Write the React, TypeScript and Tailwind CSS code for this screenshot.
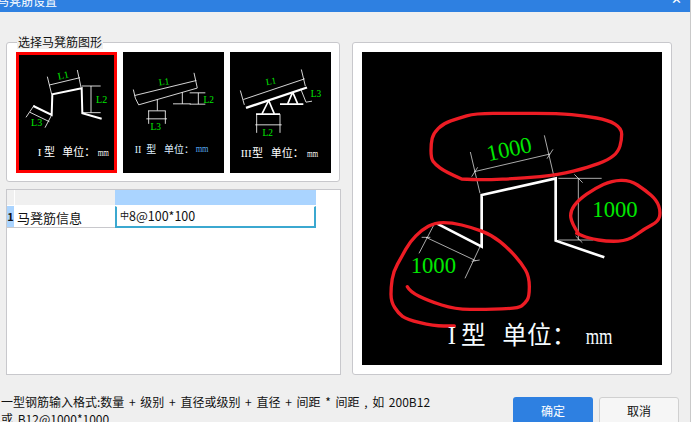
const CJK = "font-['Noto_Sans_CJK_SC','Liberation_Sans',sans-serif]";
const SERIF = "'Liberation Serif','Noto Sans CJK SC',serif";
const GREEN = '#00e800';

// hand drawn marks, points taken in canvas units
const smooth = (pts: number[][]) => {
  let d = `M${pts[0][0]} ${pts[0][1]}`;
  for (let i = 1; i < pts.length - 1; i++) {
    const mx = (pts[i][0] + pts[i + 1][0]) / 2;
    const my = (pts[i][1] + pts[i + 1][1]) / 2;
    d += ` Q${pts[i][0]} ${pts[i][1]} ${mx} ${my}`;
  }
  const last = pts[pts.length - 1];
  return d + ` L${last[0]} ${last[1]}`;
};

const LOOP_TOP = [[350, 447], [300, 425], [270, 402], [258, 385], [258, 340], [265, 310], [295, 280], [340, 265], [390, 250], [500, 250], [640, 250], [720, 258], [790, 270], [830, 295], [830, 330], [820, 365], [790, 390], [730, 412], [640, 435], [530, 445], [415, 450], [350, 447]];
const LOOP_RIGHT = [[700, 610], [680, 580], [675, 545], [700, 510], [750, 475], [800, 452], [855, 450], [900, 480], [935, 510], [947, 545], [940, 575], [900, 595], [850, 632], [790, 635], [730, 625], [695, 610]];
const LOOP_LOW = [[187, 770], [195, 785], [250, 812], [330, 838], [420, 838], [520, 835], [540, 820], [553, 800], [553, 740], [530, 700], [490, 655], [440, 615], [380, 592], [320, 578], [270, 578], [230, 600], [195, 635], [170, 680], [145, 725], [138, 770], [138, 815], [160, 850], [185, 868], [265, 888], [328, 888]];

function Thumb1() {
  return (
    <div className="w-[101px] h-[121px] border-[3px] border-[#ff0000] bg-black">
      <svg viewBox="57 165 285 345" className="w-[95px] h-[115px] block">
        <polyline points="100,318 155,345 157,283 245,265 247,340 305,356" fill="none" stroke="#fff" strokeWidth="6" />
        <g stroke="#fff" strokeWidth="2.5" fill="none">
          <path d="M142 230L155 283M232 210L243 262M148 255L240 233" />
          <path d="M245 258H302M248 338H302M273 258V338" />
          <path d="M78 352L103 315M135 383L155 345M90 337L148 365" />
        </g>
        <g fill={GREEN} fontSize="30" fontFamily={SERIF} textAnchor="middle">
          <text x="190" y="236" transform="rotate(-12 190 226)">L1</text>
          <text x="305" y="308">L2</text>
          <text x="110" y="377">L3</text>
        </g>
        <text y="469" fill="#fff" fontSize="33" fontFamily={SERIF}>
          <tspan x="113">I</tspan><tspan x="132">型</tspan><tspan x="187">单位：</tspan>
        </text>
        <text transform="translate(293 468) scale(.72 1)" fill="#fff" fontSize="30" fontFamily={SERIF}>mm</text>
      </svg>
    </div>
  );
}

function Thumb2() {
  return (
    <div className="w-[101px] h-[121px] bg-black">
      <svg viewBox="15 21 303 360" className="w-[101px] h-[121px] block">
        <g stroke="#fff" strokeWidth="2.5" fill="none">
          <path d="M50 150L235 105M62 178L237 128M46 132L52 158L62 178M228 82L238 128" />
          <path d="M118 162V195M90 196H143M92 196V235M142 196V235M85 220H147" />
          <path d="M193 140V175M165 175H218M215 142H262M215 176H262M241 142V176" />
        </g>
        <g fill={GREEN} fontSize="28" fontFamily={SERIF} textAnchor="middle">
          <text x="138" y="118" transform="rotate(-8 138 110)">L1</text>
          <text x="272" y="172">L2</text>
          <text x="113" y="252">L3</text>
        </g>
        <text y="321" fill="#dff0ff" fontSize="30" fontFamily={SERIF}>
          <tspan x="50">II</tspan><tspan x="85">型</tspan><tspan x="138">单位：</tspan>
        </text>
        <text transform="translate(233 320) scale(.83 1)" fill="#58aaf0" fontSize="30" fontFamily={SERIF}>mm</text>
      </svg>
    </div>
  );
}

function Thumb3() {
  return (
    <div className="w-[101px] h-[121px] bg-black">
      <svg viewBox="12 21 303 360" className="w-[101px] h-[121px] block">
        <g stroke="#fff" fill="none">
          <path d="M52 162L236 100M43 135L55 178M226 72L238 122" strokeWidth="2.5" />
          <path d="M60 187L243 126" strokeWidth="7" />
          <path d="M128 165L108 205M128 165L145 205M200 140L185 175M200 140L215 175" strokeWidth="5" />
          <path d="M90 206H162M162 176H232" strokeWidth="5" />
          <path d="M92 206V262M162 206V262M88 238H167M224 130L240 170L258 167" strokeWidth="2.5" />
        </g>
        <g fill={GREEN} fontSize="28" fontFamily={SERIF} textAnchor="middle">
          <text x="135" y="117" transform="rotate(-10 135 108)">L1</text>
          <text x="270" y="154">L3</text>
          <text x="125" y="272">L2</text>
        </g>
        <text y="334" fill="#fff" fontSize="33" fontFamily={SERIF}>
          <tspan x="44">III</tspan><tspan x="78">型</tspan><tspan x="134">单位：</tspan>
        </text>
        <text transform="translate(243 333) scale(.72 1)" fill="#fff" fontSize="30" fontFamily={SERIF}>mm</text>
      </svg>
    </div>
  );
}

function Preview() {
  return (
    <svg viewBox="51 66 900 939" className="w-[300px] h-[313px] block bg-black">
      <polyline points="275,580 410,650 410,495 632,445 632,632 778,682" fill="none" stroke="#fff" strokeWidth="8" />
      <g stroke="#fff" strokeWidth="2" fill="none">
        <path d="M376 366L405 490M598 316L627 440M388 425L615 372" />
        <path d="M380 440L398 412M606 386L624 358" />
        <path d="M640 445H770M640 630H745M700 445V630M688 433L713 458M692 618L712 638" />
        <path d="M222 670L270 578M360 745L405 650M243 622L392 692M230 622L256 622M380 694L404 690" />
      </g>
      <g fill={GREEN} fontSize="68" fontFamily={SERIF} textAnchor="middle">
        <text x="492" y="380" transform="rotate(-12 492 355)">1000</text>
        <text x="810" y="560">1000</text>
        <text x="265" y="729">1000</text>
      </g>
      <g fill="none" stroke="#ed1c24" strokeWidth="10" strokeLinecap="round" strokeLinejoin="round">
        <path d={smooth(LOOP_TOP)} />
        <path d={smooth(LOOP_RIGHT)} />
        <path d={smooth(LOOP_LOW)} />
      </g>
      <text y="942" fill="#f4fbff" fontSize="74" fontFamily={SERIF}>
        <tspan x="308">I</tspan><tspan x="348">型</tspan><tspan x="472">单位：</tspan>
      </text>
      <text transform="translate(722 942) scale(.72 1)" fill="#f4fbff" fontSize="72" fontFamily={SERIF}>mm</text>
    </svg>
  );
}

export default function App() {
  return (
    <div className={`w-[691px] h-[422px] overflow-hidden bg-[#efefef] text-[#111] border-r border-[#c9c9c9] ${CJK}`}>
      <div className="h-3 bg-[#2e80e1] flex justify-between overflow-hidden text-white">
        <span className="text-[12px] leading-[13px] -mt-[6px] -ml-[3px]">马凳筋设置</span>
        <span className="text-[13px] leading-[13px] -mt-[8px] mr-[8px]">✕</span>
      </div>

      <div className="flex pl-[6px] pt-[30px]">
        <div className="w-[335px] flex flex-col gap-[7px]">
          <div className="relative h-[140px] w-[334px] bg-white border border-[#c8c8cc] rounded-[3px] pl-[9px] pt-[9px] flex gap-[6px]">
            <span className="absolute left-[10px] -top-[8px] px-[1px] bg-[#efefef] text-[12px] leading-[14px]">选择马凳筋图形</span>
            <Thumb1 />
            <Thumb2 />
            <Thumb3 />
          </div>

          <div className="h-[186px] bg-white border border-[#c8c8cc]">
            <div className="grid grid-cols-[7px_101px_201px] grid-rows-[15px_22px] gap-y-[1px]">
              <div className="bg-[#f0f0f0]" />
              <div className="bg-[#f0f0f0] border-l border-white" />
              <div className="bg-[#aad4ff]" />
              <div className="bg-[#aad4ff] text-[11px] font-bold leading-[20px] overflow-hidden text-center border-b border-[#c8c8cc]">1</div>
              <div className="border-b border-[#c8c8cc] pl-[3px] text-[13px] leading-[24px]">马凳筋信息</div>
              <div className="border-x-2 border-b-2 border-t border-[#3ba8d0] border-t-white pl-[3px] text-[12.5px] leading-[17px]">
                <span className="text-[9px] align-[2px]">中</span>8@100*100
              </div>
            </div>
          </div>
        </div>

        <div className="ml-[11px] w-[320px] h-[333px] bg-white border border-[#c8c8cc] rounded-[3px] pl-[9px] pt-[9px]">
          <Preview />
        </div>
      </div>

      <div className="flex pt-[18px]">
        <p className="w-[513px] pl-[1px] text-[12px] leading-[17px] [word-spacing:2px]">
          一型钢筋输入格式:数量 + 级别 + 直径或级别 + 直径 + 间距 * 间距 , 如 200B12<br />或 B12@1000*1000
        </p>
        <button className="mt-[4px] w-[80px] h-[28px] bg-[#2e80e1] text-white text-[12px] rounded-[3px]">确定</button>
        <button className="mt-[4px] ml-[6px] w-[80px] h-[28px] bg-[#f6f6f6] border border-[#d0d0d0] text-[12px] rounded-[3px]">取消</button>
      </div>
    </div>
  );
}
